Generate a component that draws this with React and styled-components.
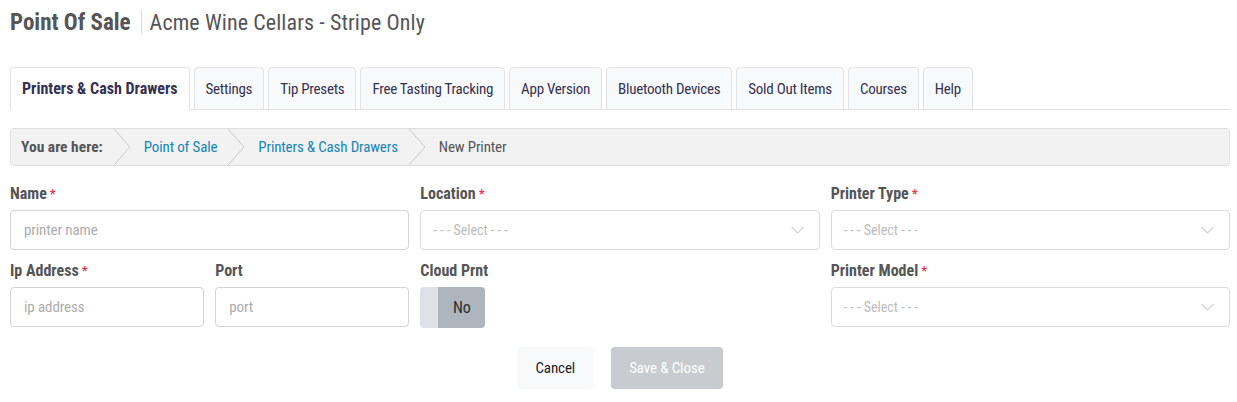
import React from "react";
import styled, { createGlobalStyle } from "styled-components";

const GlobalStyle = createGlobalStyle`
  body {
    margin: 0;
    background: #fff;
    font-family: "Roboto Condensed", Roboto, sans-serif;
    color: #555;
  }
  * { box-sizing: border-box; }
`;

const Page = styled.div`
  padding: 0 7px 0 10px;
`;

const Header = styled.div`
  height: 44px;
  display: flex;
  align-items: center;
  font-size: 22px;
`;

const HeaderTitle = styled.span`
  font-weight: 700;
  font-size: 23px;
  color: #555;
`;

const HeaderDivider = styled.span`
  width: 1px;
  height: 24px;
  background: #d6d6d6;
  margin: 0 8px 0 10px;
`;

const HeaderSub = styled.span`
  color: #555;
  letter-spacing: 0.1px;
`;

const Tabs = styled.div`
  margin-top: 23px;
  display: flex;
  gap: 4px;
  border-bottom: 1px solid #dee2e6;
  height: 43px;
`;

const Tab = styled.div`
  height: 43px;
  padding: 0 11px;
  display: flex;
  align-items: center;
  font-size: ${(p) => (p.active ? "16px" : "15px")};
  letter-spacing: ${(p) => (p.active ? "0" : "-0.25px")};
  font-weight: ${(p) => (p.active ? 700 : 400)};
  color: #34324f;
  background: ${(p) => (p.active ? "#fff" : "#f8f9fa")};
  border: 1px solid #e1e3e6;
  border-bottom-color: ${(p) => (p.active ? "#fff" : "#e1e3e6")};
  border-radius: 4px 4px 0 0;
  cursor: pointer;
`;

const Breadcrumb = styled.div`
  margin-top: 18px;
  height: 38px;
  display: flex;
  align-items: stretch;
  background: #f2f2f2;
  border: 1px solid #dedede;
  border-radius: 4px;
  padding-left: 10px;
  font-size: 15px;
`;

const Crumb = styled.span`
  display: flex;
  align-items: center;
  font-size: ${(p) => (p.strong ? "15.5px" : "15px")};
  letter-spacing: ${(p) => (p.strong ? "0" : "-0.15px")};
  font-weight: ${(p) => (p.strong ? 700 : 400)};
  color: ${(p) => (p.link ? "#1985b5" : "#555")};
`;

const CrumbSep = styled.svg`
  width: 16px;
  height: 100%;
  margin: 0 14px 0 11px;
  flex-shrink: 0;
`;

const Separator = () => (
  <CrumbSep viewBox="0 0 16 36" preserveAspectRatio="none">
    <polyline points="0,0 16,18 0,36" fill="none" stroke="#c9c9c9" strokeWidth="1" />
  </CrumbSep>
);

const Form = styled.div`
  margin-top: 18px;
  display: grid;
  grid-template-columns: repeat(3, minmax(0, 1fr));
  column-gap: 11px;
  row-gap: 11px;
`;

const Pair = styled.div`
  display: grid;
  grid-template-columns: repeat(2, minmax(0, 1fr));
  column-gap: 11px;
`;

const Field = styled.div`
  display: flex;
  flex-direction: column;
  min-width: 0;
`;

const Label = styled.label`
  height: 20px;
  line-height: 20px;
  margin-bottom: 6px;
  font-size: 16px;
  font-weight: 700;
  color: #555;
`;

const Req = styled.span`
  color: #e2354f;
  margin-left: 3px;
  font-size: 13px;
  vertical-align: top;
`;

const Input = styled.input`
  width: 100%;
  height: 40px;
  border: 1px solid #d4d4d4;
  border-radius: 4px;
  padding: 0 13px;
  font-family: inherit;
  font-size: 15px;
  letter-spacing: -0.1px;
  color: #555;
  outline: none;
  &::placeholder {
    color: #acacac;
  }
`;

const SelectBox = styled.div`
  height: 40px;
  border: 1px solid #dcdcdc;
  border-radius: 4px;
  padding: 0 15px 0 12px;
  display: flex;
  align-items: center;
  justify-content: space-between;
  font-size: 14px;
  color: #bcbcbc;
`;

const Chevron = styled.svg`
  width: 13px;
  height: 8px;
`;

const Select = () => (
  <SelectBox>
    <span>- - - Select - - -</span>
    <Chevron viewBox="0 0 13 8">
      <polyline points="0.5,1 6.5,7 12.5,1" fill="none" stroke="#b5b5b5" strokeWidth="1" />
    </Chevron>
  </SelectBox>
);

const Toggle = styled.div`
  width: 65px;
  height: 41px;
  display: flex;
  border-radius: 4px;
  overflow: hidden;
`;

const ToggleOff = styled.div`
  width: 18px;
  background: #dee2e6;
`;

const ToggleLabel = styled.div`
  flex: 1;
  background: #adb5bd;
  display: flex;
  align-items: center;
  justify-content: center;
  font-size: 16px;
  letter-spacing: -0.2px;
  color: #2b2f33;
`;

const Actions = styled.div`
  margin-top: 19px;
  display: flex;
  justify-content: center;
  gap: 18px;
`;

const Button = styled.button`
  height: 42px;
  padding: 0 18px;
  border: none;
  border-radius: 4px;
  font-family: inherit;
  font-size: 15px;
  letter-spacing: -0.1px;
  background: ${(p) => (p.primary ? "#c8cbcf" : "#f8f9fa")};
  color: ${(p) => (p.primary ? "#fff" : "#222")};
  cursor: pointer;
`;

const tabs = [
  "Printers & Cash Drawers",
  "Settings",
  "Tip Presets",
  "Free Tasting Tracking",
  "App Version",
  "Bluetooth Devices",
  "Sold Out Items",
  "Courses",
  "Help",
];

const App = () => {
  return (
    <Page>
      <GlobalStyle />
      <Header>
        <HeaderTitle>Point Of Sale</HeaderTitle>
        <HeaderDivider />
        <HeaderSub>Acme Wine Cellars - Stripe Only</HeaderSub>
      </Header>

      <Tabs>
        {tabs.map((t, idx) => (
          <Tab key={t} active={idx === 0}>
            {t}
          </Tab>
        ))}
      </Tabs>

      <Breadcrumb>
        <Crumb strong>You are here:</Crumb>
        <Separator />
        <Crumb link>Point of Sale</Crumb>
        <Separator />
        <Crumb link>Printers &amp; Cash Drawers</Crumb>
        <Separator />
        <Crumb>New Printer</Crumb>
      </Breadcrumb>

      <Form>
        <Field>
          <Label>
            Name<Req>*</Req>
          </Label>
          <Input placeholder="printer name" />
        </Field>
        <Field>
          <Label>
            Location<Req>*</Req>
          </Label>
          <Select />
        </Field>
        <Field>
          <Label>
            Printer Type<Req>*</Req>
          </Label>
          <Select />
        </Field>

        <Pair>
          <Field>
            <Label>
              Ip Address<Req>*</Req>
            </Label>
            <Input placeholder="ip address" />
          </Field>
          <Field>
            <Label>Port</Label>
            <Input placeholder="port" />
          </Field>
        </Pair>
        <Field>
          <Label>Cloud Prnt</Label>
          <Toggle>
            <ToggleOff />
            <ToggleLabel>No</ToggleLabel>
          </Toggle>
        </Field>
        <Field>
          <Label>
            Printer Model<Req>*</Req>
          </Label>
          <Select />
        </Field>
      </Form>

      <Actions>
        <Button>Cancel</Button>
        <Button primary>Save &amp; Close</Button>
      </Actions>
    </Page>
  );
};

export default App;
